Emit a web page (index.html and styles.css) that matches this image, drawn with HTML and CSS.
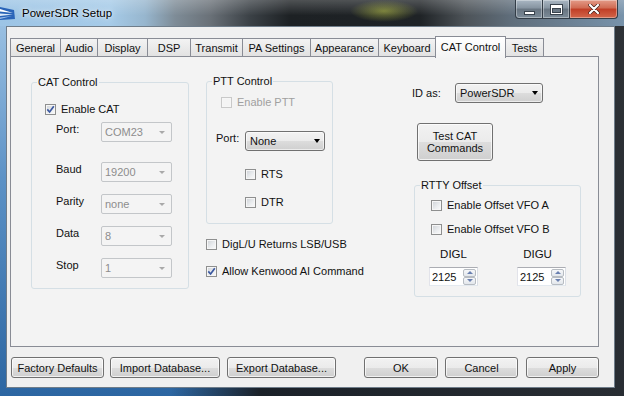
FILE: index.html
```html
<!DOCTYPE html>
<html lang="en">

<head>
    <meta charset="UTF-8">
    <title>PowerSDR Setup</title>
    <link rel="stylesheet" href="styles.css">
</head>

<body>
    <div class="window">
        <div class="titlebar">
            <svg class="app-icon" width="16" height="16" viewBox="0 0 16 16">
                <path d="M0 2 L14 5 L15 14 L0 15 Z" fill="#2a64b8"/>
                <path d="M0 4 L13 8 L0 6.5 Z" fill="#ffffff"/>
                <path d="M0 8.5 L13 9.5 L0 11 Z" fill="#dbe8f8"/>
                <path d="M0 12.5 L12 11 L0 14 Z" fill="#9fc0ea"/>
            </svg>
            <span class="title">PowerSDR Setup</span>
            <div class="caption">
                <span class="cap cap-min"><span class="glyph-min"></span></span>
                <span class="cap cap-max"><span class="glyph-max"></span></span>
                <span class="cap cap-close">
                    <svg width="12" height="10" viewBox="0 0 12 10">
                        <path d="M2 1 L10 9 M10 1 L2 9" stroke="#3a1a14" stroke-width="3.4" stroke-linecap="round"/>
                        <path d="M2 1 L10 9 M10 1 L2 9" stroke="#ffffff" stroke-width="2.2" stroke-linecap="round"/>
                    </svg>
                </span>
            </div>
        </div>

        <div class="client">
            <div class="tabstrip">
                <span class="tab">General</span>
                <span class="tab">Audio</span>
                <span class="tab">Display</span>
                <span class="tab">DSP</span>
                <span class="tab">Transmit</span>
                <span class="tab">PA Settings</span>
                <span class="tab">Appearance</span>
                <span class="tab">Keyboard</span>
                <span class="tab active">CAT Control</span>
                <span class="tab">Tests</span>
            </div>

            <div class="page">
                <!-- left: serial port settings -->
                <div class="col-cat">
                    <fieldset class="group group-cat">
                        <legend>CAT Control</legend>
                        <div class="cat-body">
                            <label class="check"><span class="box checked"><svg width="9" height="9" viewBox="0 0 9 9"><path d="M1.3 4.4 L3.6 7 L7.8 1.3" fill="none" stroke="#3b58a0" stroke-width="1.7"/></svg></span>Enable CAT</label>
                            <div class="row row-port">
                                <span class="lbl">Port:</span>
                                <span class="combo disabled">COM23<i class="arrow"></i></span>
                            </div>
                            <div class="row">
                                <span class="lbl">Baud</span>
                                <span class="combo disabled">19200<i class="arrow"></i></span>
                            </div>
                            <div class="row">
                                <span class="lbl">Parity</span>
                                <span class="combo disabled">none<i class="arrow"></i></span>
                            </div>
                            <div class="row">
                                <span class="lbl">Data</span>
                                <span class="combo disabled">8<i class="arrow"></i></span>
                            </div>
                            <div class="row">
                                <span class="lbl">Stop</span>
                                <span class="combo disabled">1<i class="arrow"></i></span>
                            </div>
                        </div>
                    </fieldset>
                </div>

                <!-- middle: PTT -->
                <div class="col-ptt">
                    <fieldset class="group group-ptt">
                        <legend>PTT Control</legend>
                        <div class="ptt-body">
                            <label class="check check-off ptt-enable"><span class="box"></span>Enable PTT</label>
                            <div class="ptt-port">
                                <span class="lbl">Port:</span>
                                <span class="combo combo-ptt">None<i class="arrow"></i></span>
                            </div>
                            <label class="check ptt-line ptt-rts"><span class="box"></span>RTS</label>
                            <label class="check ptt-line ptt-dtr"><span class="box"></span>DTR</label>
                        </div>
                    </fieldset>
                    <label class="check check-digl"><span class="box"></span>DigL/U Returns LSB/USB</label>
                    <label class="check check-ai"><span class="box checked"><svg width="9" height="9" viewBox="0 0 9 9"><path d="M1.3 4.4 L3.6 7 L7.8 1.3" fill="none" stroke="#3b58a0" stroke-width="1.7"/></svg></span>Allow Kenwood AI Command</label>
                </div>

                <!-- right: id + rtty -->
                <div class="col-id">
                    <div class="id-row">
                        <span class="lbl">ID as:</span>
                        <span class="combo combo-id">PowerSDR<i class="arrow"></i></span>
                    </div>
                    <button class="btn btn-test">Test CAT<br>Commands</button>
                    <fieldset class="group group-rtty">
                        <legend>RTTY Offset</legend>
                        <div class="rtty-body">
                            <label class="check rtty-a"><span class="box"></span>Enable Offset VFO A</label>
                            <label class="check rtty-b"><span class="box"></span>Enable Offset VFO B</label>
                            <div class="dig-row">
                                <div class="dig">
                                    <span class="dig-lbl">DIGL</span>
                                    <span class="spin">2125<span class="spin-btns"><i class="up"></i><i class="down"></i></span></span>
                                </div>
                                <div class="dig dig-u">
                                    <span class="dig-lbl">DIGU</span>
                                    <span class="spin">2125<span class="spin-btns"><i class="up"></i><i class="down"></i></span></span>
                                </div>
                            </div>
                        </div>
                    </fieldset>
                </div>
            </div>

            <div class="button-row">
                <button class="btn btn-factory">Factory Defaults</button>
                <button class="btn btn-import">Import Database...</button>
                <button class="btn btn-export">Export Database...</button>
                <button class="btn btn-ok">OK</button>
                <button class="btn btn-cancel">Cancel</button>
                <button class="btn btn-apply">Apply</button>
            </div>
        </div>
    </div>
</body>

</html>
```

FILE: styles.css
```css
* {
    box-sizing: border-box;
}

html,
body {
    margin: 0;
    padding: 0;
    width: 100%;
    height: 100%;
}

body {
    overflow: hidden;
    font-family: "Liberation Sans", Arial, sans-serif;
    font-size: 11px;
    color: #111;
    background: #1e2226;
}

/*-----window frame-----*/
.window {
    width: 624px;
    height: 396px;
    display: flex;
    flex-direction: column;
    background:
        linear-gradient(to right, rgba(25, 27, 30, 0) 0, rgba(25, 27, 30, 0) 170px, rgba(25, 27, 30, .92) 260px, rgba(40, 42, 45, .95) 100%),
        linear-gradient(to bottom, #a3c7e6 0, #5d92c6 45%, #2c66a2 100%);
}

.titlebar {
    height: 26px;
    display: flex;
    align-items: flex-start;
    background:
        radial-gradient(ellipse 34px 11px at 384px 11px, rgba(190, 200, 70, .55), rgba(190, 200, 70, 0)),
        linear-gradient(to bottom, rgba(255, 255, 255, .22), rgba(255, 255, 255, 0) 60%),
        linear-gradient(to right, #9cc4e5 0, #a6cbe8 110px, #97b6ce 145px, #7e8c97 175px, #6a7178 210px, #3b4146 250px, #1d2124 290px, #1f2326 420px, #4d5358 465px, #5f6d7a 510px, #7893ab 624px);
}

.app-icon {
    margin: 5px 0 0 0;
}

.title {
    margin: 6px 0 0 6px;
    font-size: 11.5px;
    line-height: 15px;
    color: #000;
    text-shadow: 0 0 6px rgba(255, 255, 255, .9), 0 0 2px rgba(255, 255, 255, .7);
}

.caption {
    display: flex;
    margin-left: auto;
    margin-right: 6px;
}

.cap {
    height: 19px;
    display: flex;
    align-items: center;
    justify-content: center;
    border: 1px solid #333d47;
    border-top: none;
    box-shadow: inset 0 0 0 1px rgba(255, 255, 255, .35);
    background: linear-gradient(to bottom, #aab7c3 0, #8593a0 45%, #687581 50%, #7c8b98 100%);
}

.cap-min {
    width: 28px;
    border-radius: 0 0 0 4px;
}

.cap-max {
    width: 27px;
    border-left: none;
}

.cap-close {
    width: 48px;
    border-left: none;
    border-radius: 0 0 4px 0;
    background: linear-gradient(to bottom, #e39b88 0, #d06a52 45%, #c03e26 50%, #d2664a 100%);
}

.glyph-min {
    width: 11px;
    height: 4px;
    margin-top: 7px;
    background: #fff;
    border: 1px solid #39434d;
}

.glyph-max {
    width: 11px;
    height: 9px;
    border: 1px solid #fff;
    border-top-width: 3px;
    box-shadow: 0 0 0 1px #39434d, inset 0 0 0 1px #39434d;
}

/*-----client area-----*/
.client {
    width: 609px;
    height: 362px;
    margin-left: 6px;
    border: 1px solid #6f7d8a;
    background: #f0f0f0;
    padding: 8px 0 0 3px;
}

.tabstrip {
    display: flex;
    align-items: flex-end;
    height: 22px;
}

.tab {
    height: 18px;
    margin-bottom: 1px;
    margin-left: -1px;
    display: flex;
    align-items: center;
    justify-content: center;
    border: 1px solid #898c95;
    border-bottom: none;
    background: linear-gradient(to bottom, #f3f3f3, #e2e2e2);
    white-space: nowrap;
}

.tab:first-child {
    margin-left: 0;
}

.tab:nth-child(1) { width: 51px; }
.tab:nth-child(2) { width: 38px; }
.tab:nth-child(3) { width: 51px; }
.tab:nth-child(4) { width: 44px; }
.tab:nth-child(5) { width: 53px; }
.tab:nth-child(6) { width: 69px; }
.tab:nth-child(7) { width: 69px; }
.tab:nth-child(8) { width: 58px; }
.tab:nth-child(9) { width: 71px; }
.tab:nth-child(10) { width: 39px; }

.tab.active {
    height: 22px;
    margin-bottom: -1px;
    padding-bottom: 2px;
    position: relative;
    z-index: 1;
    background: linear-gradient(to bottom, #ffffff, #f4f4f4);
}

.page {
    width: 589px;
    height: 291px;
    margin-top: -1px;
    border: 1px solid #898c95;
    background: #f3f3f3;
    display: flex;
    align-items: flex-start;
    padding: 18px 0 0 20px;
}

/*-----group boxes-----*/
.group {
    margin: 0;
    padding: 0;
    min-width: 0;
    border: 1px solid #d5dfe5;
    border-radius: 3px;
}

.group legend {
    margin-left: 5px;
    padding: 0 1px;
    line-height: 14px;
}

.lbl {
    line-height: 13px;
    padding-top: 1px;
}

/*-----checkboxes-----*/
.check {
    display: flex;
    align-items: center;
    height: 14px;
    gap: 5px;
    white-space: nowrap;
}

.box {
    width: 11px;
    height: 11px;
    flex: none;
    display: flex;
    align-items: center;
    justify-content: center;
    border: 1px solid #8e8f8f;
    background: linear-gradient(135deg, #cdd1d6 0, #eceef0 60%, #fbfbfb 100%);
    box-shadow: inset 0 0 0 1px #f6f6f6;
}

.check-off {
    color: #a0a0a0;
}

.check-off .box {
    border-color: #c9c9c9;
    background: #f4f4f4;
}

/*-----combo boxes-----*/
.combo {
    display: flex;
    align-items: center;
    justify-content: space-between;
    height: 20px;
    padding: 0 4px 0 4px;
    border: 1px solid #707070;
    border-radius: 3px;
    background: linear-gradient(to bottom, #f2f2f2 0, #ebebeb 50%, #dddddd 50%, #cfcfcf 100%);
    box-shadow: inset 0 0 0 1px rgba(255, 255, 255, .6);
}

.combo .arrow {
    width: 0;
    height: 0;
    border-left: 3.5px solid transparent;
    border-right: 3.5px solid transparent;
    border-top: 4px solid #000;
}

.combo.disabled {
    width: 71px;
    padding: 0 6px 0 3px;
    color: #8d8d8d;
    border-color: #c3c6c9;
    border-radius: 2px;
    background: #f4f4f4;
    box-shadow: none;
}

.combo.disabled .arrow {
    border-left-width: 3px;
    border-right-width: 3px;
    border-top: 3px solid #a9a9a9;
}

/*-----CAT group-----*/
.group-cat {
    width: 158px;
}

.cat-body {
    padding: 13px 0 10px 13px;
}

.cat-body .row {
    display: flex;
    align-items: flex-start;
    height: 20px;
    margin: 12px 0 0 11px;
}

.cat-body .row-port {
    margin-top: 6px;
}

.cat-body .row-port + .row {
    margin-top: 20px;
}

.cat-body .row .lbl {
    width: 45px;
}

/*-----PTT group-----*/
.col-ptt {
    width: 160px;
    margin-left: 17px;
}

.group-ptt {
    width: 127px;
    margin-top: -1px;
}

.ptt-body {
    padding: 7px 0 14px 0;
}

.ptt-enable {
    margin-left: 14px;
}

.ptt-port {
    display: flex;
    align-items: flex-start;
    margin: 22px 0 0 9px;
}

.ptt-port .lbl {
    width: 29px;
}

.combo-ptt {
    width: 80px;
}

.ptt-line {
    margin-left: 38px;
}

.ptt-rts {
    margin-top: 16px;
}

.ptt-dtr {
    margin-top: 14px;
}

.check-digl {
    margin-top: 13px;
}

.check-ai {
    margin-top: 13px;
}

/*-----ID / RTTY column-----*/
.col-id {
    width: 170px;
    margin-left: 46px;
}

.id-row {
    display: flex;
    align-items: center;
    margin-top: 8px;
}

.id-row .lbl {
    width: 43px;
    padding-top: 0;
}

.combo-id {
    width: 88px;
}

.btn {
    display: flex;
    align-items: center;
    justify-content: center;
    height: 21px;
    padding: 0;
    font-family: inherit;
    font-size: 11px;
    line-height: 12px;
    color: #111;
    border: 1px solid #707070;
    border-radius: 3px;
    background: linear-gradient(to bottom, #f2f2f2 0, #ebebeb 50%, #dddddd 50%, #cfcfcf 100%);
    box-shadow: inset 0 0 0 1px rgba(255, 255, 255, .7);
}

.btn-test {
    width: 76px;
    height: 38px;
    margin: 20px 0 0 5px;
}

.group-rtty {
    width: 167px;
    margin: 17px 0 0 2px;
}

.rtty-body {
    padding: 6px 0 10px 16px;
}

.rtty-b {
    margin-top: 10px;
}

.dig-row {
    display: flex;
    margin: 11px 0 0 -2px;
}

.dig {
    display: flex;
    flex-direction: column;
    align-items: center;
    width: 49px;
}

.dig-u {
    margin-left: 39px;
}

.dig-u .dig-lbl {
    margin-right: 8px;
}

.dig-lbl {
    line-height: 14px;
    font-size: 11.5px;
}

.spin {
    display: flex;
    align-items: center;
    justify-content: space-between;
    width: 49px;
    height: 19px;
    margin-top: 6px;
    padding: 0 1px 0 2px;
    background: #fff;
    border: 1px solid #abadb3;
    border-color: #abadb3 #dbdfe6 #e3e9ef #e2e3ea;
}

.spin-btns {
    display: flex;
    flex-direction: column;
    width: 13px;
    height: 16px;
}

.spin-btns i {
    flex: 1;
    display: flex;
    align-items: center;
    justify-content: center;
    border: 1px solid #b7bcc2;
    border-radius: 2px;
    background: linear-gradient(to bottom, #f6f7f9, #e3e7ec);
}

.spin-btns i::after {
    content: "";
    width: 0;
    height: 0;
    border-left: 3px solid transparent;
    border-right: 3px solid transparent;
}

.spin-btns .up::after {
    border-bottom: 3px solid #6a80b0;
}

.spin-btns .down::after {
    border-top: 3px solid #6a80b0;
}

/*-----bottom buttons-----*/
.button-row {
    display: flex;
    margin: 10px 0 0 1px;
}

.btn-factory { width: 93px; }
.btn-import { width: 110px; margin-left: 6px; }
.btn-export { width: 109px; margin-left: 7px; }
.btn-ok { width: 74px; margin-left: 28px; }
.btn-cancel { width: 73px; margin-left: 7px; }
.btn-apply { width: 73px; margin-left: 8px; }
```
